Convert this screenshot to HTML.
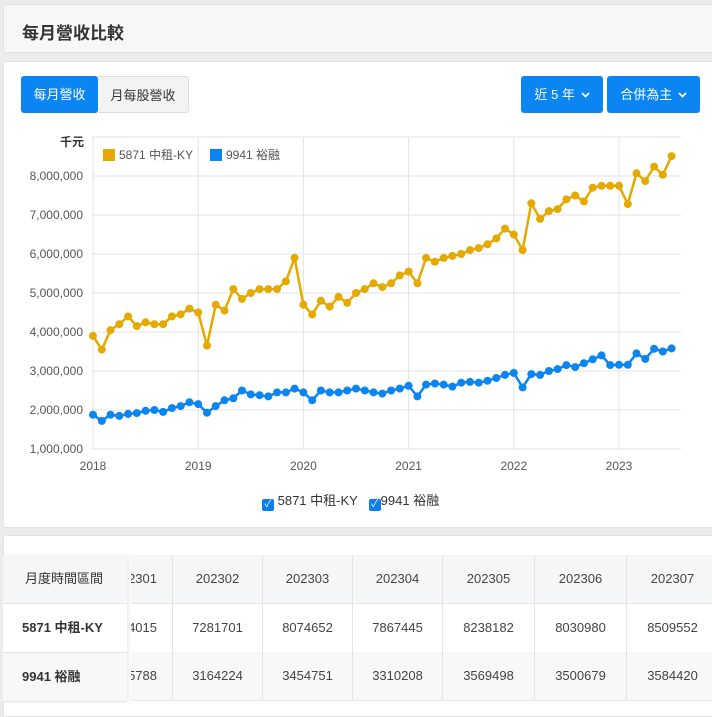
<!DOCTYPE html>
<html><head><meta charset="utf-8"><style>
body{margin:0;width:712px;height:708px;background:#ececec;font-family:"Liberation Sans","Noto Sans CJK TC",sans-serif;overflow:hidden;position:relative;color:#333}
.card{position:absolute;left:3px;right:0;background:#fff;border:1px solid #e2e2e2;border-right:none;border-radius:3px 0 0 3px}
.btn{position:absolute;top:76px;height:37px;line-height:37px;font-size:13px;text-align:center;box-sizing:border-box;border-radius:3px}
.b{background:#0a85f2;color:#fff}
.c{position:absolute;height:48px;line-height:48px;font-size:13px;text-align:center;border-right:1px solid #e4e4e4;box-sizing:border-box;overflow:hidden;color:#444}
.r{position:absolute;left:131px;right:0;height:48px;border-bottom:1px solid #e8e8e8}
.fc{position:absolute;left:3px;top:555px;width:124px;font-size:13px;font-weight:bold;box-shadow:2px 0 3px rgba(0,0,0,.08)}
.fc div{height:48px;line-height:48px;padding-left:19px;border-bottom:1px solid #e4e4e4}
</style></head><body>
<div class="card" style="top:4px;height:47px;background:#f7f7f7">
 <div style="position:absolute;left:18px;top:14px;font-size:17px;font-weight:bold;color:#333">每月營收比較</div>
</div>
<div class="card" style="top:61px;height:465px"></div>
<div class="btn b" style="left:21px;width:77px">每月營收</div>
<div class="btn" style="left:98px;width:91px;background:#f3f3f3;border:1px solid #ddd;border-left:none;border-radius:0 3px 3px 0;color:#333">月每股營收</div>
<div class="btn b" style="left:521px;width:82px">近 5 年 <svg width="9" height="6" viewBox="0 0 9 6" style="vertical-align:1px;margin-left:2px"><path d="M1 1L4.5 4.5L8 1" stroke="#fff" stroke-width="1.8" fill="none"/></svg></div>
<div class="btn b" style="left:607px;width:93px">合併為主 <svg width="9" height="6" viewBox="0 0 9 6" style="vertical-align:1px;margin-left:2px"><path d="M1 1L4.5 4.5L8 1" stroke="#fff" stroke-width="1.8" fill="none"/></svg></div>
<svg id="ch" width="712" height="530" style="position:absolute;left:0;top:0" font-family="Liberation Sans,Noto Sans CJK TC,sans-serif"></svg>
<div style="position:absolute;top:490px;left:262px;font-size:13px;color:#333">
<span style="display:inline-block;width:12px;height:12px;background:#0a7ff0;border-radius:2px;vertical-align:-2px;color:#fff;font-size:10px;line-height:12px;text-align:center">✓</span> 5871 中租-KY&nbsp;&nbsp;
<span style="display:inline-block;width:12px;height:12px;background:#0a7ff0;border-radius:2px;vertical-align:-2px;color:#fff;font-size:10px;line-height:12px;text-align:center">✓</span>9941 裕融</div>
<div class="card" style="top:535px;height:180px"></div>
<div id="tb"></div>
<div class="fc"><div style="background:#f5f6f8;font-weight:normal;padding-left:22px">月度時間區間</div><div style="background:#fff">5871 中租-KY</div><div style="background:#f7f8fa">9941 裕融</div></div>
<script>
(function(){
var s=document.getElementById('ch'),h='';
function Y(v){return 176+(8-v)*39}
for(var i=1;i<=9;i++){var y=Y(i);h+='<line x1="92" x2="681" y1="'+y+'" y2="'+y+'" stroke="#e3e3e3"/>';if(i<9)h+='<text x="83" y="'+(y+4)+'" font-size="12" fill="#555" text-anchor="end">'+i+',000,000</text>';}
h+='<text x="84" y="146" font-size="12" fill="#333" text-anchor="end" font-weight="bold">千元</text>';
for(var k=0;k<6;k++){var x=93+k*105.2;h+='<line x1="'+x+'" x2="'+x+'" y1="137" y2="449" stroke="#e3e3e3"/><text x="'+x+'" y="470" font-size="12" fill="#555" text-anchor="middle">'+(2018+k)+'</text>';}
var A=[3.9,3.55,4.05,4.2,4.4,4.15,4.25,4.2,4.2,4.4,4.45,4.6,4.5,3.65,4.7,4.55,5.1,4.85,5.0,5.1,5.1,5.1,5.3,5.9,4.7,4.45,4.8,4.65,4.9,4.75,5.0,5.1,5.25,5.15,5.25,5.45,5.55,5.25,5.9,5.8,5.9,5.95,6.0,6.1,6.15,6.25,6.4,6.65,6.5,6.1,7.3,6.9,7.1,7.15,7.4,7.5,7.35,7.7,7.75,7.75,7.75,7.28,8.07,7.87,8.24,8.03,8.51];
var B=[1.88,1.72,1.88,1.85,1.9,1.92,1.98,2.0,1.95,2.05,2.1,2.2,2.15,1.93,2.1,2.25,2.3,2.5,2.4,2.38,2.35,2.45,2.45,2.55,2.45,2.25,2.5,2.45,2.45,2.5,2.55,2.5,2.45,2.42,2.5,2.55,2.62,2.35,2.65,2.68,2.65,2.6,2.7,2.72,2.7,2.75,2.82,2.9,2.95,2.58,2.92,2.9,3.0,3.05,3.15,3.1,3.2,3.3,3.4,3.15,3.16,3.16,3.45,3.31,3.57,3.50,3.58];
function ser(D,c){var p='',d='';D.forEach(function(v,i){var x=(93+i*105.2/12).toFixed(1),y=Y(v).toFixed(1);p+=x+','+y+' ';d+='<circle cx="'+x+'" cy="'+y+'" r="4" fill="'+c+'"/>';});return '<polyline points="'+p+'" fill="none" stroke="'+c+'" stroke-width="2.5"/>'+d;}
h+=ser(A,'#e5a900')+ser(B,'#0a85f2');
h+='<rect x="103" y="149" width="12" height="12" fill="#e5a900"/><text x="119" y="159" font-size="12" fill="#555">5871 中租-KY</text><rect x="210" y="149" width="12" height="12" fill="#0a85f2"/><text x="226" y="159" font-size="12" fill="#555">9941 裕融</text>';
s.innerHTML=h;
var X=[131,173,263,353,443,535,627,719];
var R=[['202301','202302','202303','202304','202305','202306','202307'],['7754015','7281701','8074652','7867445','8238182','8030980','8509552'],['2975788','3164224','3454751','3310208','3569498','3500679','3584420']];
var bg=['#f5f6f8','#fff','#f7f8fa'],t='';
for(var r=0;r<3;r++){var ty=555+r*48.5;t+='<div class="r" style="top:'+ty+'px;background:'+bg[r]+'"></div>';
for(var c=0;c<7;c++){var w=X[c+1]-X[c];var st='left:'+X[c]+'px;top:'+ty+'px;width:'+w+'px;';
if(c==0)t+='<div class="c" style="'+st+'"><span style="position:absolute;right:15px">'+R[r][c]+'</span></div>';
else t+='<div class="c" style="'+st+'">'+R[r][c]+'</div>';}}
document.getElementById('tb').innerHTML=t;
})();
</script>
</body></html>
